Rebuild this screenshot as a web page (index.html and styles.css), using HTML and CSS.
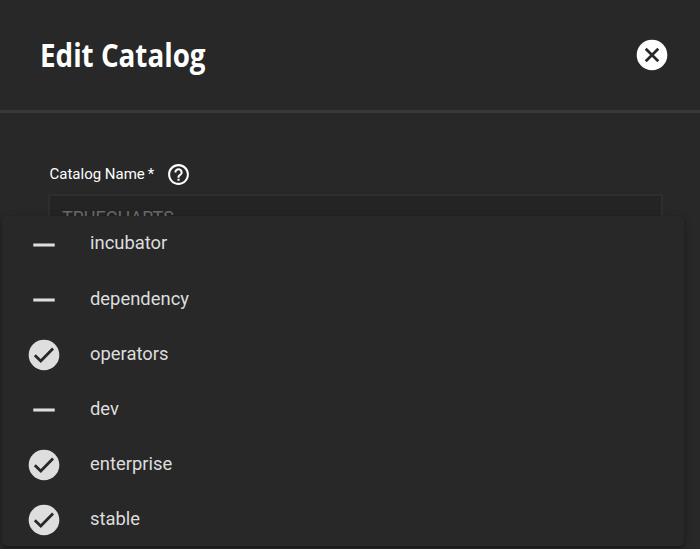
FILE: index.html
```
<!DOCTYPE html>
<html lang="en">
<head>
<meta charset="utf-8">
<title>Edit Catalog</title>
<link rel="stylesheet" href="styles.css">
</head>
<body>
<svg class="defs" width="0" height="0" aria-hidden="true">
  <symbol id="check" viewBox="0.25 0.25 23.5 23.5"><circle cx="12" cy="12" r="10"/><path class="tick" d="M6 12.100l3.900 3.800 8-8.200"/></symbol>
  <symbol id="remove" viewBox="0.25 0.25 23.5 23.5"><path d="M19 13H5v-2h14v2z"/></symbol>
</svg>
<header class="header">
  <h1 class="title">Edit Catalog</h1>
  <button class="close" aria-label="Close"><svg viewBox="0.25 0.25 23.5 23.5"><circle cx="12" cy="12" r="10"/><path class="cross" d="M7.900 7.900l8.200 8.200m0-8.200l-8.200 8.200"/></svg></button>
</header>
<main class="form">
  <div class="label"><span>Catalog Name</span><span class="star">*</span>
    <svg class="help" viewBox="0 0 24 24"><path d="M11 18h2v-2h-2v2zm1-16C6.480 2 2 6.480 2 12s4.480 10 10 10 10-4.480 10-10S17.520 2 12 2zm0 18c-4.410 0-8-3.590-8-8s3.590-8 8-8 8 3.590 8 8-3.590 8-8 8zm0-14c-2.210 0-4 1.790-4 4h2c0-1.100.9-2 2-2s2 .9 2 2c0 2-3 1.750-3 5h2c0-2.250 3-2.500 3-5 0-2.210-1.790-4-4-4z"/></svg>
  </div>
  <div class="input">TRUECHARTS</div>
</main>
<div class="menu">
  <div class="option"><svg><use href="#remove"/></svg><span>incubator</span></div>
  <div class="option"><svg><use href="#remove"/></svg><span>dependency</span></div>
  <div class="option"><svg><use href="#check"/></svg><span>operators</span></div>
  <div class="option"><svg><use href="#remove"/></svg><span>dev</span></div>
  <div class="option"><svg><use href="#check"/></svg><span>enterprise</span></div>
  <div class="option"><svg><use href="#check"/></svg><span>stable</span></div>
</div>
</body>
</html>
```
FILE: styles.css
```
* { box-sizing: border-box; }
body {
  margin: 0;
  height: 549px;
  overflow: hidden;
  position: relative;
  background: #282828;
  color: #fff;
  font-family: Roboto, "Liberation Sans", sans-serif;
}
.defs { position: absolute; }
.header {
  height: 113px;
  padding: 0 30px 0 40px;
  border-bottom: 3px solid #383838;
  display: flex;
  align-items: center;
  justify-content: space-between;
}
.title {
  margin: 0;
  font: 700 32px/40px "Open Sans", sans-serif;
  transform: scaleX(.868);
  transform-origin: left;
  white-space: nowrap;
}
.close {
  width: 36px;
  height: 36px;
  padding: 0;
  border: 0;
  background: none;
}
svg { display: block; fill: currentColor; }
.close svg { width: 36px; height: 36px; color: #fff; }
.tick { fill: none; stroke: #282828; stroke-width: 1.800; }
.cross { stroke: #282828; stroke-width: 1.800; }
.form { padding: 49px 37px 0 48px; }
.label {
  display: flex;
  align-items: center;
  height: 25px;
  padding-left: 1.500px;
  font-size: 15px;
}
.label span { position: relative; top: -1px; }
.star { margin-left: 3px; }
.help { width: 25px; height: 25px; margin-left: 11.500px; }
.input {
  height: 44px;
  margin-top: 7px;
  padding: 0 12px;
  border: 2px solid #2e2e2e;
  border-radius: 2px;
  background: #242424;
  color: #6a6a6a;
  font-size: 18px;
  line-height: 43px;
}
.menu {
  position: absolute;
  left: 2px;
  top: 216px;
  width: 682px;
  height: 330px;
  padding-top: 1px;
  border-radius: 5px;
  background: #282828;
  color: #dedede;
  box-shadow: 0 2px 4px -1px rgba(0,0,0,.2), 0 4px 5px rgba(0,0,0,.14), 0 1px 10px rgba(0,0,0,.12);
}
.option {
  display: flex;
  align-items: center;
  height: 55px;
  padding-left: 24px;
  font-size: 18.400px;
}
.option svg { width: 36px; height: 36px; margin: 1px 28px 0 0; }
.option span { position: relative; top: -1px; }
.option:first-child span { top: -2px; }
```
